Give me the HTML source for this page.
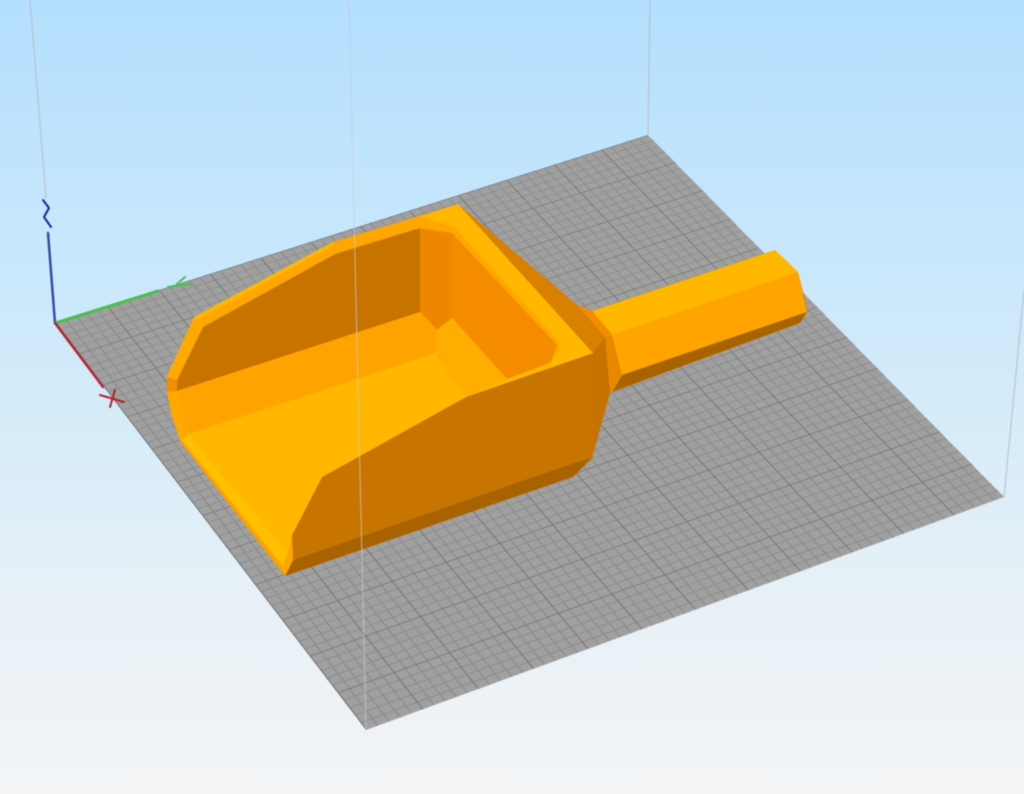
<!DOCTYPE html>
<html><head><meta charset="utf-8"><style>
html,body{margin:0;padding:0;width:1024px;height:794px;overflow:hidden}
#v{position:relative;width:1024px;height:794px;overflow:hidden;background:linear-gradient(180deg,#b3dffe 0,#c5e6fc 27%,#d7ecf9 55%,#e5f0f7 72%,#f3f4f6 100%)}
#wrap{position:absolute;left:0;top:0;width:1024px;height:794px;filter:blur(.5px)}
#bed{position:absolute;left:0;top:0;width:1200px;height:1200px;transform-origin:0 0;
transform:matrix3d(.525515,-.150135,0,.000048385, .227775,.27655,0,-.000085775, 0,0,1,0, 55,323,0,1);
background-color:#a0a0a0;
background-image:linear-gradient(to right,#767676 2px,transparent 2px),linear-gradient(to bottom,#767676 2px,transparent 2px),linear-gradient(to right,#898989 2px,transparent 2px),linear-gradient(to bottom,#898989 2px,transparent 2px);
background-size:100px 100px,100px 100px,20px 20px,20px 20px}
svg{position:absolute;left:0;top:0}
</style></head><body><div id="v">
<div id="wrap"><div id="bed"></div></div>
<svg width="1024" height="794" viewBox="0 0 1024 794" style="filter:blur(.45px)">
<g fill="none" stroke="#b9bdc0" stroke-width="1">
<line x1="30" y1="0" x2="46" y2="198"/>
<line x1="650" y1="0" x2="648" y2="135"/>
<line x1="1024" y1="290" x2="1004" y2="497"/>
</g>
<!-- axes -->
<g fill="none" stroke-linecap="round" stroke-linejoin="round">
<path d="M48 233L55 323" stroke="#2b48a6" stroke-width="2.4"/>
<path d="M43 200L49 208L44 217L51 227" stroke="#14289a" stroke-width="2"/>
<path d="M55 323L158 291" stroke="#46c24a" stroke-width="2.8"/>
<path d="M168 287L191 284M177 284L185 277" stroke="#46c24a" stroke-width="2"/>
<path d="M55 323L103 387" stroke="#b8202c" stroke-width="2.4"/>
<path d="M100 395L124 402M115 390L110 407" stroke="#b8202c" stroke-width="2"/>
</g>
<!-- handle -->
<polygon points="592,311 775,250 798,272 807,312 800,323 612,392 605,340" fill="#ffa300"/>
<polygon points="592,311 775,250 798,272 612,335" fill="#ffb700"/>
<polygon points="612,335 798,272 807,312 622,375" fill="#ffa400"/>
<polygon points="622,375 807,312 800,323 612,392" fill="#a86300"/>
<polygon points="798,272 807,312 805,300" fill="#c87400"/>
<!-- neck -->
<polygon points="605,337 612,335 622,375 612,391 607,396" fill="#e98800"/>
<polygon points="577,305 592,311 612,334 605,337" fill="#f58c00"/>
<!-- back outer strip -->
<polygon points="458,204 577,305 605,337 593,353" fill="#d98000"/>
<!-- side faces -->
<polygon points="593,353 605,337 610,393 592,458" fill="#c57200"/>
<polygon points="292,535 322,477 466,397 593,353 593,458 577,462 293,560" fill="#c87400"/>
<polygon points="293,560 577,462 592,458 573,477 285,576" fill="#a86300"/>
<!-- base fill under the scoop's left side -->
<polygon points="167,377 194,317 333,242 458,204 593,353 466,397 322,477 292,535 285,576 180,441 172,416 167,392" fill="#ffa800"/>
<!-- rim top -->
<polygon points="458,204 593,353 466,397 435,353 177,391 166,378 194,317 333,242 420,217" fill="#ffb700"/>
<!-- back rim -->
<polygon points="333,242 420,217 453,226 452,233 420,228 335,254" fill="#ffa600"/>
<polygon points="420,217 458,204 453,226" fill="#ffb700"/>
<!-- inner band -->
<polygon points="453,226 560,343 557,353 550,363 452,233" fill="#ffa600"/>
<!-- inner dark wall -->
<polygon points="420,228 335,254 203,327 177,380 177,391 420,312" fill="#c67300"/>
<!-- corner facet, right wall -->
<polygon points="420,228 452,233 452,318 437,330 420,312" fill="#ee8700"/>
<polygon points="452,233 557,345 550,363 507,379 452,318" fill="#f58c00"/>
<!-- left rim facets -->
<polygon points="194,317 333,242 335,254 203,327" fill="#ffa600"/>
<polygon points="194,317 333,242 334,245 197,320" fill="#ffb700"/>
<polygon points="194,317 203,327 177,380 167,377" fill="#ffa800"/>
<polygon points="167,377 177,380 177,391 167,392" fill="#f09000"/>
<!-- band wall -->
<polygon points="177,391 420,312 437,330 435,353 190,435" fill="#ffa300"/>
<polygon points="167,392 177,391 190,435 182,441 172,416" fill="#ffa800"/>
<!-- floor -->
<polygon points="437,330 452,318 507,379 466,397 435,353" fill="#ffad00"/>
<polygon points="188,434 435,353 466,397 322,477 292,535 288,552" fill="#ffb700"/>
<polygon points="182,440 188,434 288,552 283,567" fill="#ffc000"/>
<polygon points="180,441 182,440 283,567 285,576" fill="#ffa000"/>
<polygon points="288,552 292,535 293,560 285,576 283,567" fill="#ffa500"/>
<!-- vertical line in front -->
<line x1="349" y1="0" x2="366" y2="730" stroke="#c9cccc" stroke-opacity=".75" stroke-width="1"/>
</svg>
</div></body></html>
